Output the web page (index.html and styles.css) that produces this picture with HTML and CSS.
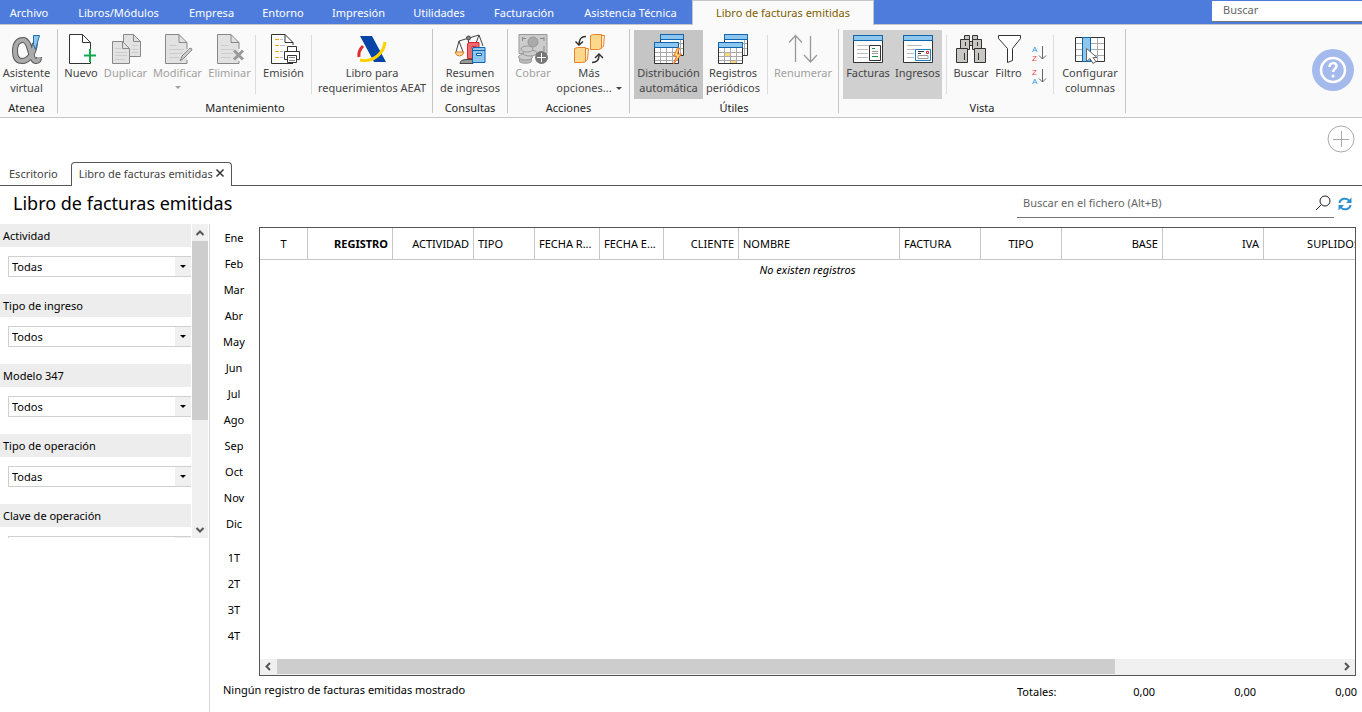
FILE: index.html
```
<!DOCTYPE html>
<html lang="es">
<head>
<meta charset="utf-8">
<title>Libro de facturas emitidas</title>
<link rel="stylesheet" href="styles.css">
</head>
<body>
<header class="menubar">
  <nav class="menu">
    <button class="menu-first">Archivo</button>
    <button>Libros/Módulos</button>
    <button>Empresa</button>
    <button>Entorno</button>
    <button>Impresión</button>
    <button>Utilidades</button>
    <button>Facturación</button>
    <button>Asistencia Técnica</button>
    <button class="menu-active">Libro de facturas emitidas</button>
  </nav>
  <input class="menu-search" type="text" placeholder="Buscar" aria-label="Buscar">
</header>

<section class="ribbon">
  <div class="group g-atenea">
    <div class="tools">
      <button class="tool">
        <svg width="32" height="32" viewBox="0 0 32 32" fill="none"><path d="M24 10C23 20 18 28 11 28C6 28 4 24 4 18C4 11 7 7 12 7C20 7 19 28 25 28Q28 28 28 24" stroke="#555" stroke-width="6"/><path d="M24 10C23 20 18 28 11 28C6 28 4 24 4 18C4 11 7 7 12 7C20 7 19 28 25 28Q28 28 28 24" stroke="#aaa" stroke-width="4"/><path d="M22.500 2.500h6l-4 14-2-5z" fill="#8fc6ee" stroke="#1d6fb0"/></svg>
        <span>Asistente<br>virtual</span></button>
    </div>
    <h2>Atenea</h2>
  </div>

  <div class="group g-mant">
    <div class="tools">
      <button class="tool">
        <svg width="32" height="32" viewBox="0 0 32 32" fill="none"><path d="M25.500 17V9.500l-8-8h-13v29h21V28" fill="#fff" stroke="#333"/><path d="M17.500 1.500v8h8" stroke="#333"/><path d="M25 16v13M19 22.500h12" stroke="#12a84c" stroke-width="2"/></svg>
        <span>Nuevo</span></button>
      <button class="tool" disabled>
        <svg width="32" height="32" viewBox="0 0 32 32" fill="#e2e2e2" stroke="#888"><path d="M13.500 1.500h10l7 7v15h-17z"/><path d="M23.500 1.500v7h7" fill="none"/><path d="M22 12.500h6M22 16.500h6M22 19.500h6" stroke="#ccc"/><path d="M2.500 8.500h10l7 7v15h-17z"/><path d="M12.500 8.500v7h7" fill="none"/><path d="M5 15.500h6M5 19.500h12M5 22.500h12M5 26.500h10" stroke="#ccc"/></svg>
        <span>Duplicar</span></button>
      <button class="tool" disabled>
        <svg width="32" height="32" viewBox="0 0 32 32" fill="#e2e2e2" stroke="#888"><path d="M25 16V9.500l-8-8H3.500v29H25V27"/><path d="M17 1.500v8h8" fill="none"/><path d="M7 12.500h8M7 16.500h15M7 20.500h14M7 24.500h10" stroke="#ccc"/><path d="M18 28l2-5 8-8q2 0 2 2l-8 8z" fill="#ccc"/></svg>
        <span>Modificar</span><i class="caret"></i></button>
      <button class="tool" disabled>
        <svg width="32" height="32" viewBox="0 0 32 32" fill="#e2e2e2" stroke="#888"><path d="M25 16V9.500l-8-8H3.500v29H25V28"/><path d="M17 1.500v8h8" fill="none"/><path d="M7 12.500h8M7 16.500h13M7 20.500h12M7 24.500h10" stroke="#ccc"/><path d="M20 17.500l9 9M29 17.500l-9 9" stroke-width="3" stroke="#999"/></svg>
        <span>Eliminar</span></button>
      <hr>
      <button class="tool">
        <svg width="32" height="32" viewBox="0 0 32 32" fill="none" stroke="#333"><path d="M25 12V9.500l-8-8H3.500v29H25" fill="#fff"/><path d="M17 1.500v8h8"/><path d="M12 6.500h3M12 12.500h5M12 18.500h3M12 24.500h3" stroke="#bbb"/><path d="M7 6.500h4M7 12.500h4M7 18.500h4M7 24.500h4" stroke="#f0a30a"/><path d="M19.500 19v-5.500h9V19" fill="#fff"/><path d="M16.500 18.500h15v8h-15z" fill="#fff"/><path d="M19.500 22.500h9v7h-9z" fill="#fff"/><path d="M21 24.500h6M21 27.500h6" stroke="#888"/></svg>
        <span>Emisión</span></button>
      <hr>
      <button class="tool">
        <svg width="32" height="32" viewBox="0 0 32 32" fill="none"><path d="M4 3h12l14 26H18z" fill="#0545a8"/><path d="M29 9C28 20 17 30 4 27" stroke="#ffd200" stroke-width="3"/><path d="M7 13Q2 18 3 24" stroke="#e12a2a" stroke-width="3"/></svg>
        <span>Libro para<br>requerimientos AEAT</span></button>
    </div>
    <h2>Mantenimiento</h2>
  </div>

  <div class="group g-cons">
    <div class="tools">
      <button class="tool">
        <svg width="32" height="32" viewBox="0 0 32 32" fill="none" stroke="#444"><path d="M5 8L25 2M14.500 5v24M5 8L2 19M5 8l4 11M25 2l-3 8M25 2l4 11"/><circle cx="14.500" cy="5" r="2" fill="#888"/><path d="M1 19h9q-1 4-4.500 4T1 19z" fill="#ffd9a0" stroke="#e07b1d"/><path d="M6 30.500q0-4 7-4h6v4z" fill="#999"/><path d="M15 9.500h10v16H13.500V11z" fill="#ef6a6f" stroke="#d8262c"/><path d="M18 13.500h4v2h-4z" fill="#fff" stroke="#d8262c"/><path d="M19 14.500h12v15H18.500V16z" fill="#8fc6ee" stroke="#0d66ad"/><path d="M18.500 17.500H31" stroke="#0d66ad"/><path d="M22.500 20.500h5v2h-5z" fill="#fff" stroke="#0d66ad"/></svg>
        <span>Resumen<br>de ingresos</span></button>
    </div>
    <h2>Consultas</h2>
  </div>

  <div class="group g-acc">
    <div class="tools">
      <button class="tool" disabled>
        <svg width="32" height="32" viewBox="0 0 32 32" fill="#ccc" stroke="#999"><path d="M2 1.500h28v19H2z"/><path d="M5 5.500h4M23 5.500h4M5.500 4v4M27 4v4M27 13v5" stroke="#888"/><circle cx="16" cy="9" r="5" fill="#aaa"/><path d="M2.500 24v4c0 3 12 3 12 0v-4" fill="#bbb"/><ellipse cx="8.500" cy="24" rx="7" ry="3"/><ellipse cx="13" cy="20" rx="7" ry="3"/><ellipse cx="10" cy="16" rx="6" ry="3"/><circle cx="24.500" cy="24.500" r="6.500" fill="#777" stroke="none"/><path d="M20 24.500h9M24.500 20v9" stroke="#fff"/></svg>
        <span>Cobrar</span></button>
      <button class="tool">
        <svg width="32" height="32" viewBox="0 0 32 32" fill="#fcd88d" stroke="#e8852c"><path d="M26.500 2.500h5l-1 11-4 2z" fill="#fff0dc"/><path d="M17.500 2.500l3-1h8v14l-3 1h-8z"/><path d="M10.500 15.500h5l-1 11-4 3z" fill="#fff0dc"/><path d="M1.500 15.500l3-1h8v14l-3 1h-8z"/><path d="M13 3.500Q6 3 6 12M2.500 8.500L6 12l4-3.500M19 29.500q7 0 7-7M22 25l4-4 4 4" fill="none" stroke="#333" stroke-width="1.500"/></svg>
        <span>Más<br>opciones...<i class="caret inline"></i></span></button>
    </div>
    <h2>Acciones</h2>
  </div>

  <div class="group g-util">
    <div class="tools">
      <button class="tool on strong" aria-pressed="true">
        <svg width="32" height="32" viewBox="0 0 32 32" fill="#fff" stroke="#333"><path d="M7.500 1.500h23v21h-23z"/><path d="M25 10.500h5M25 15.500h5M27.500 7v15" stroke="#aaa"/><path d="M7.500 1.500h23v5h-23z" fill="#8fc6ee" stroke="#0d66ad"/><path d="M1.500 9.500h24v21h-24z"/><path d="M2 19.500h23M2 23.500h23M2 27.500h23M7.500 15v15M13.500 15v15M19.500 15v15" stroke="#aaa"/><path d="M1.500 9.500h24v5h-24z" fill="#8fc6ee" stroke="#0d66ad"/><path d="M24.500 15l-4 8h3l-3 8 8-10h-4l2-6z" fill="#ffd77d" stroke="#e86b1c"/></svg>
        <span>Distribución<br>automática</span></button>
      <button class="tool">
        <svg width="32" height="32" viewBox="0 0 32 32" fill="#fff" stroke="#333"><path d="M7.500 1.500h23v21h-23z"/><path d="M25 10.500h5M25 15.500h5M27.500 7v15" stroke="#aaa"/><path d="M7.500 1.500h23v5h-23z" fill="#8fc6ee" stroke="#0d66ad"/><path d="M1.500 9.500h24v21h-24z"/><path d="M8 19h6v4H8zM14 27h6v3h-6z" fill="#ffd77d" stroke="none"/><path d="M2 19.500h23M2 23.500h23M2 27.500h23M7.500 15v15M13.500 15v15M19.500 15v15" stroke="#aaa"/><path d="M1.500 9.500h24v5h-24z" fill="#8fc6ee" stroke="#0d66ad"/></svg>
        <span>Registros<br>periódicos</span></button>
      <hr>
      <button class="tool" disabled>
        <svg width="32" height="32" viewBox="0 0 32 32" fill="none" stroke="#999"><path d="M8.500 3v26M2 9.500l6.500-7 6.500 7M23.500 3v26M17 22l6.500 7 6.500-7" stroke-width="1.300"/></svg>
        <span>Renumerar</span></button>
    </div>
    <h2>Útiles</h2>
  </div>

  <div class="group g-vista">
    <div class="tools">
      <button class="tool on" aria-pressed="true">
        <svg width="32" height="32" viewBox="0 0 32 32" fill="#fff" stroke="#333"><path d="M1.500 2.500h29v27h-29z"/><path d="M1.500 2.500h29v5h-29z" fill="#8fc6ee" stroke="#0d66ad"/><path d="M5 12.500h20M5 16.500h11M5 20.500h11M5 24.500h11" stroke="#bbb"/><path d="M17.500 12.500h11v15h-11z"/><path d="M20 15.500h3M20 23.500h6" stroke="#12963f"/><path d="M20 18.500h6M20 20.500h6" stroke="#999"/></svg>
        <span>Facturas</span></button>
      <button class="tool on" aria-pressed="true">
        <svg width="32" height="32" viewBox="0 0 32 32" fill="#fff" stroke="#333"><path d="M1.500 2.500h29v27h-29z"/><path d="M1.500 2.500h29v5h-29z" fill="#8fc6ee" stroke="#0d66ad"/><path d="M5 12.500h15M5 16.500h8M5 20.500h7M5 24.500h7" stroke="#bbb"/><path d="M13.500 16.500h15v11h-15z" stroke="#1b81c5"/><path d="M16 18.500h6M16 20.500h3" /><path d="M24.500 18.500h2v2h-2z" stroke="#dd2c32"/><path d="M16 22.500h10v3H16z" stroke="#999"/></svg>
        <span>Ingresos</span></button>
      <hr>
      <button class="tool">
        <svg width="32" height="32" viewBox="0 0 32 32" fill="#c8c7c4" stroke="#333"><path d="M9.500 2.500h5v4h-5zM17.500 2.500h5v4h-5z"/><path d="M5.500 6.500h9v10h-9zM17.500 6.500h9v10h-9zM14.500 8.500h3v4h-3z"/><path d="M1.500 15.500h11v14h-11zM19.500 15.500h11v14h-11z"/><path d="M10.500 9v4M22.500 9v4M9.500 20v7M23.500 20v7"/></svg>
        <span>Buscar</span></button>
      <button class="tool">
        <svg width="32" height="32" viewBox="0 0 32 32" fill="#fff" stroke="#333"><path d="M5.500 2.500h22v3l-8 10v12l-5 2v-14l-9-10z"/></svg>
        <span>Filtro</span></button>
      <div class="sorts">
        <button aria-label="Orden ascendente"><svg width="16" height="18" viewBox="0 0 16 18" fill="none"><text class="az" x="1" y="8" fill="#2f9bdc">A</text><text class="az" x="1" y="17" fill="#e8484e">Z</text><path d="M11.500 2v13M8 11.500l3.500 3.500 3.500-3.500" stroke="#666"/></svg></button>
        <button aria-label="Orden descendente"><svg width="16" height="18" viewBox="0 0 16 18" fill="none"><text class="az" x="1" y="8" fill="#e8484e">Z</text><text class="az" x="1" y="17" fill="#2f9bdc">A</text><path d="M11.500 2v13M8 11.500l3.500 3.500 3.500-3.500" stroke="#666"/></svg></button>
      </div>
      <hr>
      <button class="tool">
        <svg width="32" height="32" viewBox="0 0 32 32" fill="#fff" stroke="#333"><path d="M1.500 4.500h29v24h-29z"/><path d="M2 10.500h28M2 16.500h28M2 22.500h28M23.500 5v23" stroke="#aaa"/><path d="M8.500 4.500h8v24h-8z" fill="#8fc6ee" stroke="#0d66ad"/><path d="M12.500 15.500v13l3.500-3 3 5 3-2-3-4h4z" stroke="#666"/></svg>
        <span>Configurar<br>columnas</span></button>
    </div>
    <h2>Vista</h2>
  </div>

  <button class="help" aria-label="Ayuda"><svg width="42" height="42" viewBox="0 0 42 42" fill="none" stroke="#fff"><circle cx="21" cy="21" r="21" fill="#a5baec" stroke="none"/><circle cx="21" cy="21" r="12" stroke-width="2.500"/><path d="M17.500 18c0-5 7-5 7-1 0 3-3.500 3-3.500 6" stroke-width="2.500"/><circle cx="21" cy="27" r="1.500" fill="#fff" stroke="none"/></svg></button>
</section>

<div class="tabstrip">
  <nav class="tabs">
    <button class="tab">Escritorio</button>
    <button class="tab tab-on">Libro de facturas emitidas <svg width="10" height="10" viewBox="0 0 10 10"><path d="M1.500 1.500l7 7M8.500 1.500l-7 7" stroke="#333" stroke-width="1.500"/></svg></button>
  </nav>
  <button class="add" aria-label="Añadir"><svg width="28" height="28" viewBox="0 0 28 28" fill="none" stroke="#aaa"><circle cx="14" cy="14" r="13"/><path d="M6 14.500h16M14.500 6v16"/></svg></button>
</div>

<div class="heading">
  <h1>Libro de facturas emitidas</h1>
  <label class="filesearch"><input type="text" placeholder="Buscar en el fichero (Alt+B)" aria-label="Buscar en el fichero"><svg width="16" height="16" viewBox="0 0 16 16" fill="none" stroke="#222"><circle cx="10" cy="6" r="5"/><path d="M6.500 9.500L1 15"/></svg></label>
  <button class="refresh" aria-label="Actualizar"><svg width="14" height="14" viewBox="0 0 14 14" fill="none" stroke="#2e8fd0" stroke-width="2"><path d="M1.500 6C2 1.500 8.500 0 11.500 4M12.500 8C12 12.500 5.500 14 2.500 10"/><path d="M13.500 0.500v5.500H8zM0.500 13.500V8H6z" fill="#2e8fd0" stroke="none"/></svg></button>
</div>

<main class="work">
  <aside class="side">
    <div class="filters">
      <div class="fields">
        <div class="field"><label for="f1">Actividad</label><div class="combo"><select id="f1"><option>Todas</option></select><i></i></div></div>
        <div class="field"><label for="f2">Tipo de ingreso</label><div class="combo"><select id="f2"><option>Todos</option></select><i></i></div></div>
        <div class="field"><label for="f3">Modelo 347</label><div class="combo"><select id="f3"><option>Todos</option></select><i></i></div></div>
        <div class="field"><label for="f4">Tipo de operación</label><div class="combo"><select id="f4"><option>Todas</option></select><i></i></div></div>
        <div class="field"><label for="f5">Clave de operación</label><div class="combo"><select id="f5"><option></option></select><i></i></div></div>
      </div>
      <div class="vbar">
        <svg width="16" height="17" viewBox="0 0 16 17" fill="none"><path d="M4.500 11L8 7.500l3.500 3.500" stroke="#555" stroke-width="2"/></svg>
        <div class="vthumb"></div>
        <svg width="16" height="17" viewBox="0 0 16 17" fill="none"><path d="M4.500 7L8 10.500 11.500 7" stroke="#555" stroke-width="2"/></svg>
      </div>
    </div>
  </aside>

  <nav class="periods">
    <button>Ene</button><button>Feb</button><button>Mar</button><button>Abr</button><button>May</button><button>Jun</button><button>Jul</button><button>Ago</button><button>Sep</button><button>Oct</button><button>Nov</button><button>Dic</button>
    <button class="first-q">1T</button><button>2T</button><button>3T</button><button>4T</button>
  </nav>

  <section class="gridbox">
    <div class="rows">
      <table>
        <colgroup><col class="w48"><col class="w85"><col class="w81"><col class="w61"><col class="w65"><col class="w64"><col class="w75"><col class="w161"><col class="w81"><col class="w81"><col class="w101"><col class="w101"><col class="w101"></colgroup>
        <thead><tr><th class="c">T</th><th class="r b">REGISTRO</th><th class="r">ACTIVIDAD</th><th>TIPO</th><th>FECHA R...</th><th>FECHA E...</th><th class="r">CLIENTE</th><th>NOMBRE</th><th>FACTURA</th><th class="c">TIPO</th><th class="r">BASE</th><th class="r">IVA</th><th class="r">SUPLIDOS</th></tr></thead>
      </table>
      <p>No existen registros</p>
    </div>
    <div class="hbar">
      <svg width="17" height="15" viewBox="0 0 17 15" fill="none"><path d="M10 4L6.500 7.500 10 11" stroke="#555" stroke-width="2"/></svg>
      <div class="htrack"><div class="hthumb"></div></div>
      <svg width="17" height="15" viewBox="0 0 17 15" fill="none"><path d="M7 4l3.500 3.500L7 11" stroke="#555" stroke-width="2"/></svg>
    </div>
  </section>

  <footer class="status">
    <span>Ningún registro de facturas emitidas mostrado</span>
    <div class="totals"><span>Totales:</span><span class="r">0,00</span><span class="r">0,00</span><span class="r">0,00</span></div>
  </footer>
</main>
</body>
</html>
```
FILE: styles.css
```
* { box-sizing: border-box; }
body, button, input, select {
  font-family: "Noto Sans", "Open Sans", sans-serif;
  font-size: 11px;
}
body {
  margin: 0;
  height: 100vh;
  display: flex;
  flex-direction: column;
  overflow: hidden;
  background: #fff;
  color: #000;
  line-height: 15px;
}
button {
  border: 0;
  padding: 0;
  background: none;
  color: inherit;
  line-height: 15px;
  white-space: nowrap;
}
svg { display: block; flex: none; }
input { border: 0; outline: 0; background: none; }
input::placeholder { color: #666; opacity: 1; }
h1, h2, p { margin: 0; font-weight: normal; }

/* Menu bar */
.menubar {
  flex: none;
  height: 24px;
  display: flex;
  justify-content: space-between;
  background: #4e7cdc;
}
.menu {
  display: grid;
  grid-template-columns: 62px 113px 73px 70px 81px 80px 90px 123px 182px;
}
.menu button { color: #fff; }
.menu .menu-first { padding-right: 4px; }
.menu .menu-active {
  position: relative;
  height: 25px;
  padding-bottom: 1px;
  background: #fafafa;
  color: #7f6000;
  border: 1px solid #c6c6c6;
  border-bottom: 0;
}
.menu-search {
  width: 150px;
  height: 21px;
  margin-top: 1px;
  padding: 0 11px 3px;
  background: #fff;
  border-bottom: 1px solid #777;
}

/* Ribbon */
.ribbon {
  flex: none;
  height: 94px;
  display: flex;
  background: #fafafa;
  border-top: 1px solid #c6c6c6;
  border-bottom: 1px solid #c6c6c6;
  color: #444;
}
.group {
  display: flex;
  flex-direction: column;
  margin: 4px 0;
  padding: 1px 4px 0;
  border-right: 1px solid #c6c6c6;
}
.group h2 {
  flex: none;
  margin-top: 2px;
  font-size: 11px;
  line-height: 14px;
  color: #222;
  text-align: center;
}
.tools { display: grid; flex: none; height: 69px; }
.g-atenea { width: 58px; padding: 1px 4px 0 0; }
.g-mant { width: 375px; }
.g-mant .tools { grid-template-columns: 38px 51px 53px 51px 1px 55px 1px 120px; }
.g-cons { width: 75px; }
.g-acc { width: 122px; }
.g-acc .tools { grid-template-columns: 42px 70px; }
.g-util { width: 209px; }
.g-util .tools { grid-template-columns: 69px 60px 9px 62px; }
.g-vista { width: 287px; }
.g-vista .tools { grid-template-columns: 50px 49px 9px 40px 35px 26px 3px 70px; }
.tools hr {
  width: 1px;
  height: 59px;
  margin: 5px auto;
  border: 0;
  background: #dcdcdc;
}
.tool {
  display: flex;
  flex-direction: column;
  align-items: center;
  padding-top: 3px;
  min-width: 0;
}
.tool span { text-align: center; }
.tool:disabled { color: #a0a0a0; }
.tool.on { background: #d0d0d0; }
.tool.strong { background: #c5c5c5; }
.caret {
  display: inline-block;
  border: 3px solid transparent;
  border-top-color: currentColor;
  border-bottom: 0;
  margin-top: 6px;
}
.caret.inline { margin: 0 0 2px 4px; }
.sorts {
  display: flex;
  flex-direction: column;
  align-items: center;
  gap: 5px;
  padding-top: 14px;
}
.az { font: 8px "Liberation Sans", sans-serif; }
.help { margin: 0 8px 2px auto; }

/* Document tabs */
.tabstrip {
  flex: none;
  height: 68px;
  display: flex;
  justify-content: space-between;
  align-items: flex-end;
  border-bottom: 1px solid #555;
}
.tabs { display: flex; align-items: flex-end; }
.tab {
  display: flex;
  align-items: center;
  gap: 2px;
  height: 23px;
  padding: 0 13px 1px 9px;
  color: #444;
}
.tab-on {
  position: relative;
  height: 24px;
  margin-bottom: -1px;
  padding: 0 6px 3px 7px;
  background: #fff;
  border: 1px solid #555;
  border-bottom: 0;
  border-radius: 4px 4px 0 0;
}
.add { align-self: flex-start; margin: 7px 7px 0 0; }

/* Page heading */
.heading {
  flex: none;
  height: 38px;
  display: flex;
  align-items: flex-start;
  padding: 3px 10px 0 13px;
}
.heading h1 { font-size: 18px; line-height: 28px; margin-right: auto; }
.filesearch {
  display: flex;
  align-items: center;
  width: 317px;
  height: 29px;
  padding: 0 3px 0 6px;
  border-bottom: 1px solid #777;
}
.filesearch input { flex: 1; padding: 0 0 2px; }
.refresh { margin: 8px 0 0 4px; }

/* Work area */
.work {
  flex: 1;
  min-height: 0;
  display: grid;
  grid-template-columns: 210px 49px minmax(0, 1fr);
  grid-template-rows: minmax(0, 1fr) 36px;
}
.side { grid-row: 1 / 3; border-right: 1px solid #d5d5d5; }
.filters {
  display: grid;
  grid-template-columns: 191px 16px;
  column-gap: 1px;
  height: 314px;
}
.fields {
  height: 314px;
  overflow: hidden;
  display: flex;
  flex-direction: column;
  gap: 17px;
}
.field { flex: none; }
.field label {
  display: block;
  padding: 4px 3px;
  background: #ededed;
}
.combo {
  display: flex;
  height: 21px;
  margin: 9px 0 0 8px;
  border: 1px solid #d0d0d0;
  border-right: 0;
}
.field select {
  appearance: none;
  flex: 1;
  border: 0;
  padding: 0 3px;
  background: #fff;
  color: #000;
}
.combo i { width: 16px; background: #f0f0f0; }
.combo i::after {
  content: "";
  display: block;
  width: 0;
  margin: 8px auto 0;
  border: 3px solid transparent;
  border-top-color: #000;
  border-bottom: 0;
}
.vbar {
  display: flex;
  flex-direction: column;
  background: #f0f0f0;
}
.vthumb { height: 179px; margin-bottom: auto; background: #cdcdcd; }
.periods { display: flex; flex-direction: column; padding-right: 1px; }
.periods button { height: 26px; }
.periods .first-q { margin-top: 8px; }

/* Invoice grid */
.gridbox {
  display: flex;
  flex-direction: column;
  margin: 3px 6px 0 0;
  border: 1px solid #555;
}
.rows { flex: 1; overflow: hidden; }
.rows table {
  table-layout: fixed;
  width: 1105px;
  border-spacing: 0;
}
.rows th {
  height: 32px;
  padding: 0 4px;
  border-right: 1px solid #c6c6c6;
  border-bottom: 1px solid #c6c6c6;
  font-weight: normal;
  text-align: left;
  white-space: nowrap;
}
.rows .c { text-align: center; }
.rows .r { text-align: right; }
.rows .b { font-weight: bold; }
.w48 { width: 48px; }
.w61 { width: 61px; }
.w64 { width: 64px; }
.w65 { width: 65px; }
.w75 { width: 75px; }
.w81 { width: 81px; }
.w85 { width: 85px; }
.w101 { width: 101px; }
.w161 { width: 161px; }
.rows p { padding-top: 2px; text-align: center; font-style: italic; }
.hbar { display: flex; height: 16px; background: #f0f0f0; }
.htrack { flex: 1; }
.hthumb { width: 79%; height: 15px; background: #cdcdcd; }

/* Status line */
.status {
  grid-column: 2 / 4;
  display: flex;
  justify-content: space-between;
  padding: 6px 5px 0 13px;
}
.totals {
  display: grid;
  grid-template-columns: 37px repeat(3, 101px);
  padding-top: 2px;
}
.totals .r { text-align: right; }
```
